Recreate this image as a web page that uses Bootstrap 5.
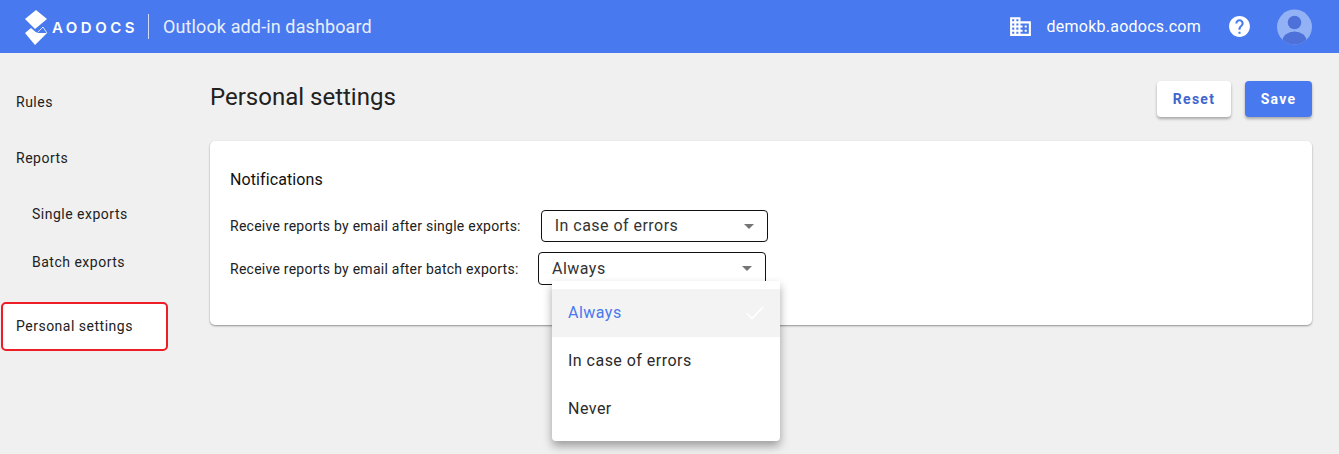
<!DOCTYPE html>
<html lang="en">
<head>
<meta charset="utf-8">
<title>Outlook add-in dashboard</title>
<link href="https://cdn.jsdelivr.net/npm/bootstrap@5.3.0/dist/css/bootstrap.min.css" rel="stylesheet">
<style>
html,body{height:100%;overflow:hidden}
body{background:#f0f0f0;font-family:Roboto,"Liberation Sans",sans-serif;color:#212121}
.top-bar{height:53px;background:#4879ee;color:#fff;padding:0 27px 0 23px}
.logo-mark{width:27px;height:36px;margin-right:2px}
.logo-word{font-family:Inter,Roboto,sans-serif;font-size:15px;font-weight:600;letter-spacing:3.5px;line-height:1;margin-top:1px}
.bar-sep{width:1px;height:25px;background:rgba(255,255,255,.75);margin:0 14px 0 10px}
.bar-title{font-size:18px;letter-spacing:.12px;color:#e8eefd;margin-top:-1px}
.bar-domain{font-size:16px;font-weight:400;letter-spacing:.24px;margin:0 26px 0 14px}
.avatar-ic{margin-left:25px}
.side-col{width:170px;padding:25px 0 0 1px}
.side-link{height:48px;padding-left:15px;font-size:14px;letter-spacing:.5px;color:#212121;text-decoration:none;display:flex;align-items:center;margin-bottom:8px}
.side-sub{padding-left:31px;margin-bottom:0}
.side-active{width:167px;height:49px;margin-top:16px;background:#fff;border:2px solid #ee1c25;border-radius:5px;padding-left:13px}
.main-col{margin-left:40px;width:1102px;padding-top:28px}
.page-title{font-size:24px;font-weight:400;margin:0;line-height:32px;color:#212121}
.act-btn{height:36px;font-size:14px;font-weight:700;letter-spacing:1.25px;border:0;border-radius:4px;box-shadow:0 2px 3px rgba(0,0,0,.3);padding:0}
.btn-reset{width:74px;background:#fff;color:#3f66cf;margin-right:14px}
.btn-save{width:67px;background:#4879ee;color:#fff}
.panel{height:184px;margin-top:24px;background:#fff;border-radius:5px;box-shadow:0 1px 2px rgba(0,0,0,.4);padding:28px 20px 0}
.panel-head{font-size:16px;font-weight:400;letter-spacing:.1px;line-height:22px;color:#111;margin-bottom:19px}
.opt-row{position:relative}
.opt-label{font-size:14px;letter-spacing:.25px;color:#212121;white-space:nowrap;padding-top:1px}
.opt-box{height:32px;border:1px solid #111;border-radius:4px;padding:0 13px;font-size:16px;letter-spacing:.47px;display:flex;align-items:center;justify-content:space-between;color:#333}
.caret-ic{width:0;height:0;border-left:5px solid transparent;border-right:5px solid transparent;border-top:5px solid #757575}
.box-one{width:227px;margin-left:20px}
.box-two{width:228px;height:33px;margin-left:19.5px;position:relative}
.row-one{margin-bottom:10px}
.pop-menu{position:absolute;left:13px;top:28px;width:228px;height:160px;background:#fff;border-radius:0 0 4px 4px;box-shadow:0 5px 10px rgba(0,0,0,.35);padding:8px 0;z-index:5}
.pop-item{height:48px;padding:0 16px;display:flex;align-items:center;justify-content:space-between;font-size:16px;letter-spacing:.47px;color:#2b2b2b}
.pop-on{background:#f3f3f3;color:#4879ee}
</style>
</head>
<body>
<header class="top-bar d-flex align-items-center">
  <svg class="logo-mark" viewBox="0 0 27 36" aria-hidden="true">
    <path fill="#fff" d="M13 1 24 10 12 20 2 10Z"/>
    <path fill="#fff" d="M8 19 12 22.500 14.500 24 24 24 12 36 2 24Z"/>
    <path fill="none" stroke="#fff" stroke-width=".8" d="M14.500 23.500 20 18 24 24"/>
  </svg>
  <span class="logo-word">AODOCS</span>
  <span class="bar-sep"></span>
  <span class="bar-title">Outlook add-in dashboard</span>
  <div class="ms-auto d-flex align-items-center">
    <svg width="25" height="25" viewBox="0 0 24 24" aria-hidden="true"><path fill="#fff" d="M12 7V3H2v18h20V7H12zM6 19H4v-2h2v2zm0-4H4v-2h2v2zm0-4H4V9h2v2zm0-4H4V5h2v2zm4 12H8v-2h2v2zm0-4H8v-2h2v2zm0-4H8V9h2v2zm0-4H8V5h2v2zm10 12h-8v-2h2v-2h-2v-2h2v-2h-2V9h8v10zm-2-8h-2v2h2v-2zm0 4h-2v2h2v-2z"/></svg>
    <span class="bar-domain">demokb.aodocs.com</span>
    <svg width="25" height="25" viewBox="0 0 24 24" aria-hidden="true"><path fill="#fff" d="M12 2C6.48 2 2 6.48 2 12s4.48 10 10 10 10-4.48 10-10S17.520 2 12 2zm1 17h-2v-2h2v2zm2.070-7.750-.9.920C13.450 12.900 13 13.500 13 15h-2v-.5c0-1.100.450-2.100 1.170-2.830l1.240-1.260c.370-.360.590-.860.590-1.410 0-1.100-.9-2-2-2s-2 .9-2 2H8c0-2.210 1.790-4 4-4s4 1.790 4 4c0 .880-.360 1.680-.930 2.250z"/></svg>
    <svg class="avatar-ic" width="35" height="36" viewBox="0 0 35 36" aria-hidden="true"><defs><clipPath id="av"><circle cx="17.500" cy="18" r="17.500"/></clipPath></defs><circle cx="17.500" cy="18" r="17.500" fill="#93b2f5"/><g clip-path="url(#av)" fill="#4d71d8"><circle cx="17.500" cy="13.500" r="6.800"/><ellipse cx="17.500" cy="32" rx="12" ry="9.500"/></g></svg>
  </div>
</header>
<div class="d-flex">
  <nav class="side-col">
    <a class="side-link" href="#">Rules</a>
    <a class="side-link" href="#">Reports</a>
    <a class="side-link side-sub" href="#">Single exports</a>
    <a class="side-link side-sub" href="#">Batch exports</a>
    <a class="side-link side-active" href="#">Personal settings</a>
  </nav>
  <main class="main-col">
    <div class="d-flex justify-content-between align-items-start">
      <h1 class="page-title">Personal settings</h1>
      <div class="d-flex">
        <button class="act-btn btn-reset" type="button">Reset</button>
        <button class="act-btn btn-save" type="button">Save</button>
      </div>
    </div>
    <section class="panel">
      <div class="panel-head">Notifications</div>
      <div class="opt-row row-one d-flex align-items-center">
        <span class="opt-label">Receive reports by email after single exports:</span>
        <div class="opt-box box-one"><span>In case of errors</span><span class="caret-ic"></span></div>
      </div>
      <div class="opt-row d-flex align-items-center">
        <span class="opt-label">Receive reports by email after batch exports:</span>
        <div class="opt-box box-two"><span>Always</span><span class="caret-ic"></span>
          <div class="pop-menu">
            <div class="pop-item pop-on"><span>Always</span>
              <svg width="18" height="14" viewBox="0 0 18 14" aria-hidden="true"><path fill="none" stroke="#fff" stroke-width="1.600" d="M1 7.500 6 12.500 17 1"/></svg>
            </div>
            <div class="pop-item">In case of errors</div>
            <div class="pop-item">Never</div>
          </div>
        </div>
      </div>
    </section>
  </main>
</div>
<script src="https://cdn.jsdelivr.net/npm/bootstrap@5.3.0/dist/js/bootstrap.bundle.min.js"></script>
</body>
</html>
